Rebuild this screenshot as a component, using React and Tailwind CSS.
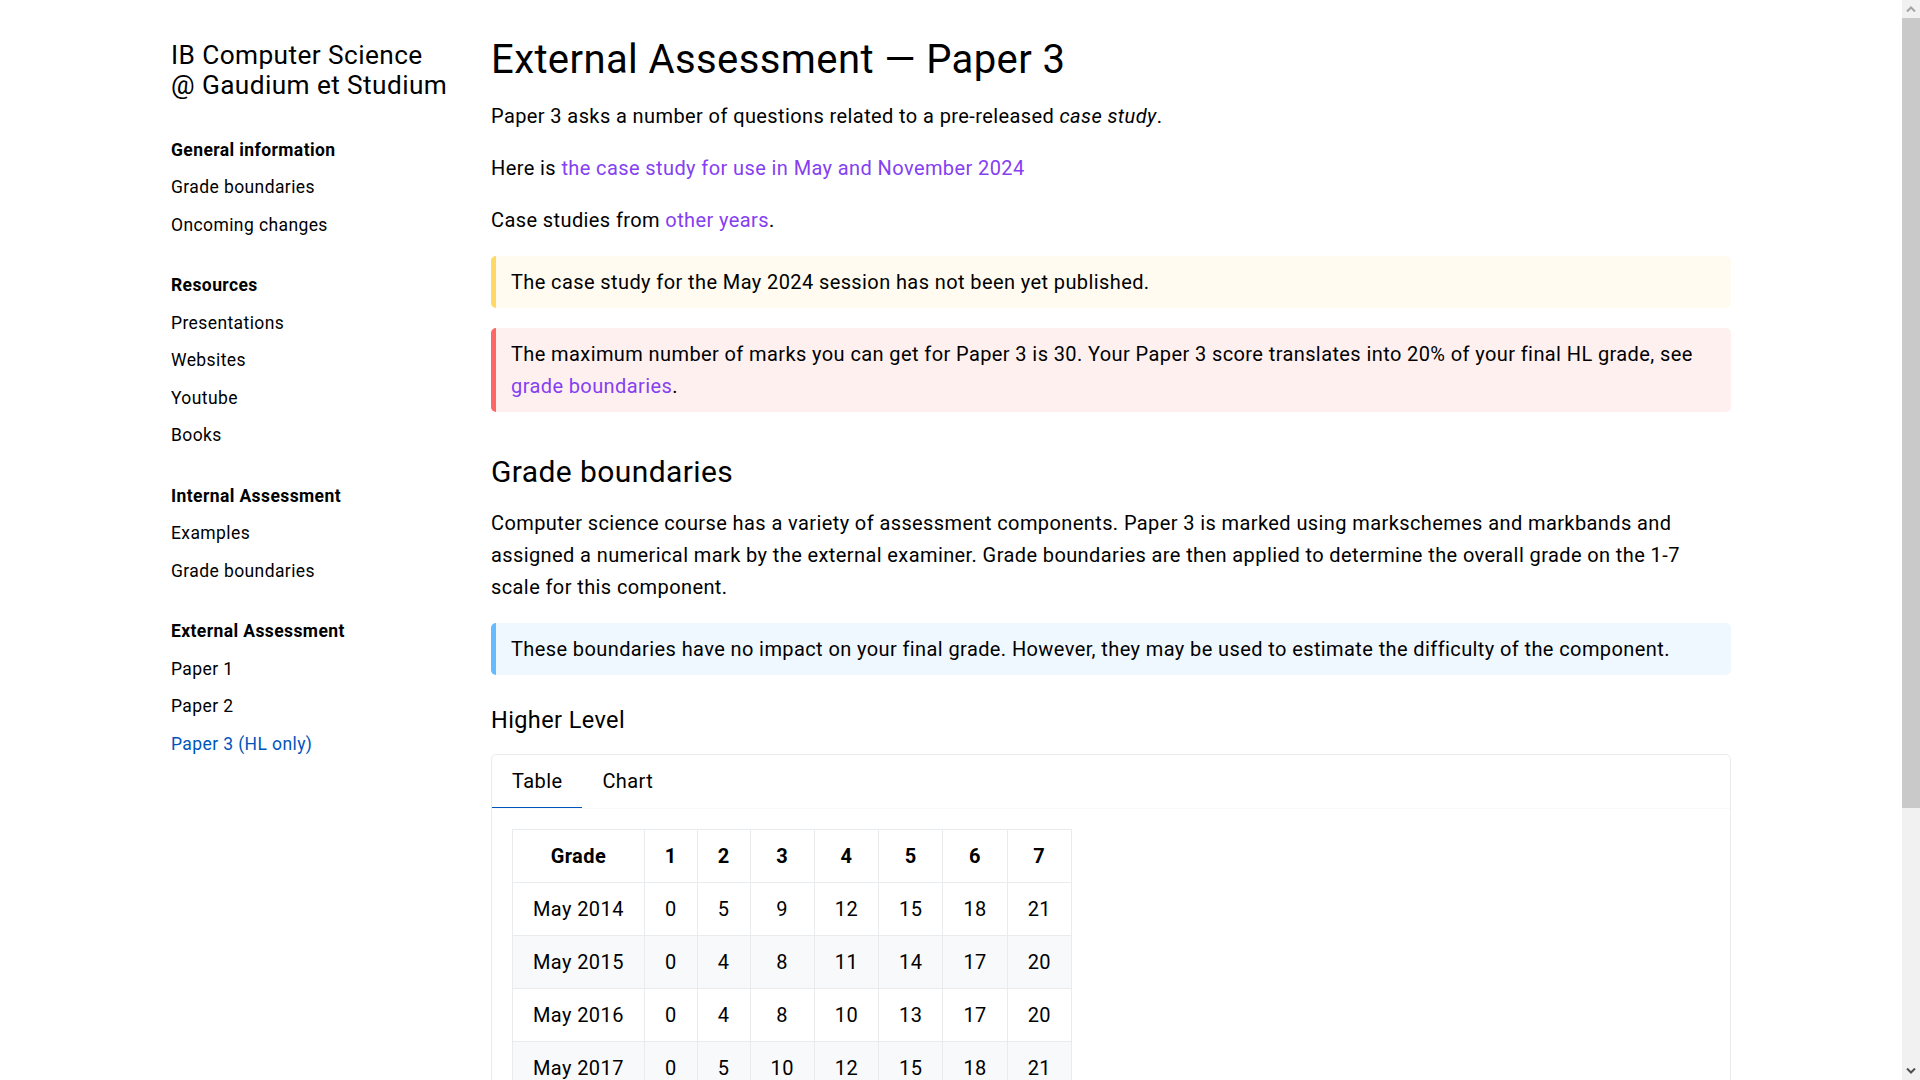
import { useState } from "react";

const menu = [
  { title: "General information", items: ["Grade boundaries", "Oncoming changes"] },
  { title: "Resources", items: ["Presentations", "Websites", "Youtube", "Books"] },
  { title: "Internal Assessment", items: ["Examples", "Grade boundaries"] },
  { title: "External Assessment", items: ["Paper 1", "Paper 2", "Paper 3 (HL only)"] },
];

const active = "Paper 3 (HL only)";

const hlRows = [
  ["May 2014", 0, 5, 9, 12, 15, 18, 21],
  ["May 2015", 0, 4, 8, 11, 14, 17, 20],
  ["May 2016", 0, 4, 8, 10, 13, 17, 20],
  ["May 2017", 0, 5, 10, 12, 15, 18, 21],
  ["May 2018", 0, 4, 8, 11, 14, 17, 20],
  ["May 2019", 0, 5, 9, 12, 15, 18, 21],
  ["May 2021", 0, 4, 8, 11, 14, 17, 20],
  ["May 2022", 0, 5, 9, 12, 15, 18, 21],
  ["May 2023", 0, 4, 8, 11, 14, 17, 20],
];

const Hint = ({ tone, children }) => {
  const tones = {
    warning: "border-[#ffd866] bg-[#fffbf0]",
    danger: "border-[#ff6666] bg-[#fff0f0]",
    info: "border-[#66bbff] bg-[#f0f8ff]",
  };
  return (
    <div className={"mt-5 border-l-[5px] rounded-[5px] py-[10px] pl-[15px] pr-5 " + tones[tone]}>
      {children}
    </div>
  );
};

const A = ({ children }) => (
  <a href="#" className="text-[#8440f1] no-underline">
    {children}
  </a>
);

const GradeTable = ({ rows }) => (
  <table className="border-collapse text-center">
    <thead>
      <tr>
        {["Grade", 1, 2, 3, 4, 5, 6, 7].map((h) => (
          <th key={h} className="border border-[#e9ecef] px-5 py-[10px] font-bold">
            {h}
          </th>
        ))}
      </tr>
    </thead>
    <tbody>
      {rows.map((r, i) => (
        <tr key={i} className={i % 2 === 1 ? "bg-[#f8f9fa]" : ""}>
          {r.map((c, j) => (
            <td key={j} className="border border-[#e9ecef] px-5 py-[10px]">
              {c}
            </td>
          ))}
        </tr>
      ))}
    </tbody>
  </table>
);

const Tabs = ({ rows }) => {
  const [tab, setTab] = useState("Table");
  return (
    <div className="mt-[21.5px] border border-[#e9ecef] rounded-[5px] overflow-hidden">
      <div className="flex">
        {["Table", "Chart"].map((t) => (
          <button
            key={t}
            onClick={() => setTab(t)}
            className={
              "px-5 py-[10px] leading-8 tracking-[0.4px] border-b " +
              (tab === t ? "border-[#0055bb]" : "border-transparent")
            }
          >
            {t}
          </button>
        ))}
      </div>
      <div className="border-t border-[#f8f9fa] p-5">
        {tab === "Table" ? (
          <GradeTable rows={rows} />
        ) : (
          <div className="h-[400px] text-[#6c757d]">Chart</div>
        )}
      </div>
    </div>
  );
};

// the browser scrollbar seen on the right of the page
const ScrollBar = () => (
  <div className="w-[18px] shrink-0 flex flex-col bg-[#f1f1f1]">
    <div className="h-[18px] flex items-center justify-center">
      <svg width="10" height="6" viewBox="0 0 10 6">
        <path d="M1 5.5 L5 1.5 L9 5.5" fill="none" stroke="#a3a3a3" strokeWidth="2" />
      </svg>
    </div>
    <div className="h-[790px] bg-[#c9c9c9]" />
    <div className="flex-1" />
    <div className="h-[18px] flex items-center justify-center">
      <svg width="10" height="6" viewBox="0 0 10 6">
        <path d="M1 0.5 L5 4.5 L9 0.5" fill="none" stroke="#505050" strokeWidth="2" />
      </svg>
    </div>
  </div>
);

export default function App() {
  return (
    <div className="h-screen flex overflow-hidden bg-white text-black font-[family-name:Roboto,sans-serif] tracking-[0.4px]">
      <div className="flex-1 min-w-0 overflow-hidden">
        <div className="w-[1600px] mx-auto flex">
          <aside className="w-[320px] shrink-0 px-5 pt-10 text-[17.5px] leading-7">
            <h2 className="text-[26.25px] leading-[30px] mb-[31px]">
              IB Computer Science
              <br />@ Gaudium et Studium
            </h2>
            {menu.map((s, i) => (
              <div key={s.title} className={i > 0 ? "mt-[23px]" : ""}>
                <div className="font-bold py-[4.75px]">{s.title}</div>
                {s.items.map((it) => (
                  <a
                    key={it}
                    href="#"
                    className={"block py-[4.75px] " + (it === active ? "text-[#0055bb]" : "text-black")}
                  >
                    {it}
                  </a>
                ))}
              </div>
            ))}
          </aside>

          <main className="flex-1 min-w-0 px-5 pt-10 pb-20 text-[20px] leading-8">
            <h1 className="text-[40px] leading-none">External Assessment — Paper 3</h1>
            <p className="mt-5">
              Paper 3 asks a number of questions related to a pre-released <em>case study</em>.
            </p>
            <p className="mt-5">
              Here is <A>the case study for use in May and November 2024</A>
            </p>
            <p className="mt-5">
              Case studies from <A>other years</A>.
            </p>
            <Hint tone="warning">The case study for the May 2024 session has not been yet published.</Hint>
            <Hint tone="danger">
              The maximum number of marks you can get for Paper 3 is 30. Your Paper 3 score translates into 20% of
              your final HL grade, see <A>grade boundaries</A>.
            </Hint>

            <h2 className="mt-[45px] text-[30px] leading-none">Grade boundaries</h2>
            <p className="mt-5">
              Computer science course has a variety of assessment components. Paper 3 is marked using markschemes
              and markbands and assigned a numerical mark by the external examiner. Grade boundaries are then
              applied to determine the overall grade on the 1-7 scale for this component.
            </p>
            <Hint tone="info">
              These boundaries have no impact on your final grade. However, they may be used to estimate the
              difficulty of the component.
            </Hint>

            <h4 className="mt-[34px] text-[23.5px] leading-none">Higher Level</h4>
            <Tabs rows={hlRows} />
          </main>
        </div>
      </div>
      <ScrollBar />
    </div>
  );
}
